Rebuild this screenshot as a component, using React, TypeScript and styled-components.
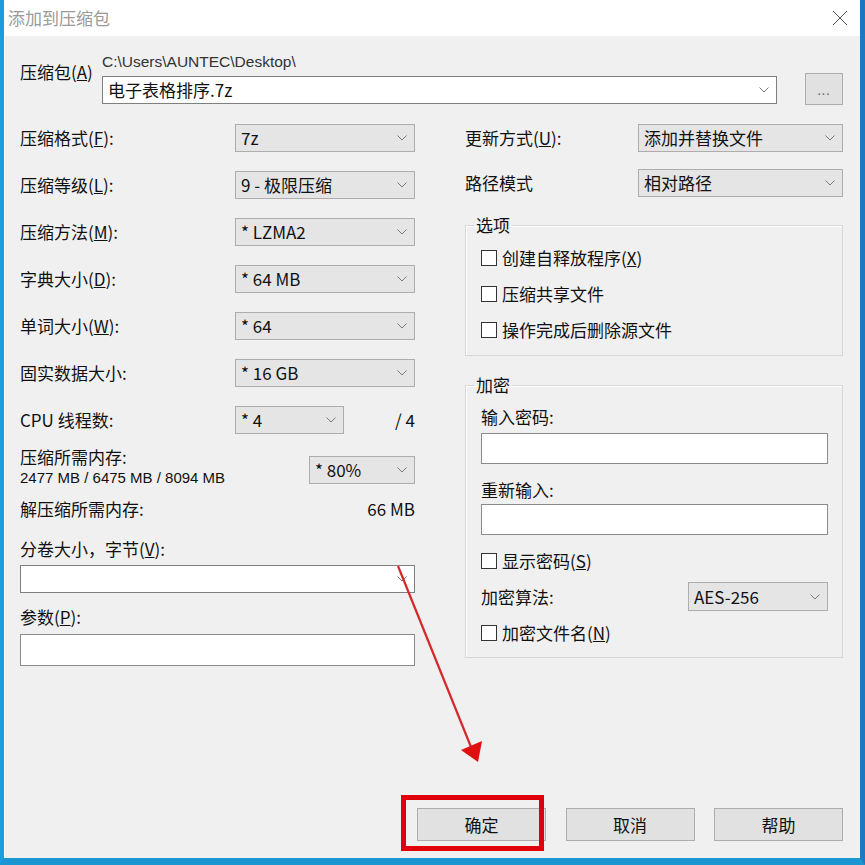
import React from "react";
import styled, { createGlobalStyle } from "styled-components";

const GlobalStyle = createGlobalStyle`
  html, body { margin: 0; padding: 0; background: #ffffff; }
  body { font-family: "Noto Sans CJK SC", "Liberation Sans", sans-serif; }
  * { box-sizing: border-box; }
`;

const Window = styled.div`
  position: relative;
  width: 865px;
  height: 865px;
  display: flex;
  flex-direction: column;
  border-left: 4px solid #1d9ce0;
  border-right: 5px solid #1f78bf;
  border-bottom: 7px solid #1c96d2;
  background: #f0f0f0;
  font-size: 17px;
  color: #111;
`;

const TitleBar = styled.div`
  flex: none;
  height: 36px;
  background: #ffffff;
  display: flex;
  align-items: center;
  justify-content: space-between;
  padding: 0 12px 0 4px;
`;

const TitleText = styled.span`
  color: #9a9a9a;
  font-size: 17px;
  line-height: 20px;
`;

const Body = styled.div`
  flex: 1;
  display: flex;
  flex-direction: column;
  padding: 17px 17px 17px 16px;
  box-shadow: inset 1px 0 0 #ffffff;
`;

const ArchiveRow = styled.div`
  display: grid;
  grid-template-columns: 82px 1fr 66px;
  align-items: start;
`;

const ArchiveLabel = styled.div`
  padding-top: 9px;
  line-height: 20px;
`;

const PathBlock = styled.div`
  display: flex;
  flex-direction: column;
`;

const PathText = styled.div`
  font-family: "Liberation Sans", "Noto Sans CJK SC", sans-serif;
  line-height: 18px;
  height: 18px;
  font-size: 15.5px;
  color: #333;
`;

const LatinLine = styled.div`
  font-family: "Liberation Sans", "Noto Sans CJK SC", sans-serif;
  font-size: 15px;
  line-height: 21px;
  height: 21px;
`;

const Combo = styled.div<{ $white?: boolean; $h?: number; $w?: number; $mt?: number }>`
  height: ${(p) => p.$h ?? 28}px;
  width: ${(p) => (p.$w ? `${p.$w}px` : "auto")};
  margin-top: ${(p) => p.$mt ?? 0}px;
  display: flex;
  align-items: center;
  justify-content: space-between;
  padding: 0 7px 0 5px;
  background: ${(p) => (p.$white ? "#ffffff" : "#e5e5e5")};
  border: 1px solid ${(p) => (p.$white ? "#7f7f7f" : "#adadad")};
  line-height: 20px;
  white-space: nowrap;
`;

const TextInput = styled.div<{ $h: number; $mt: number }>`
  height: ${(p) => p.$h}px;
  margin-top: ${(p) => p.$mt}px;
  background: #ffffff;
  border: 1px solid #8a8a8a;
`;

const BrowseButton = styled.div`
  justify-self: end;
  margin-top: 20px;
  width: 38px;
  height: 32px;
  background: #e1e1e1;
  border: 1px solid #adadad;
  color: #666;
  font-size: 12px;
  display: flex;
  align-items: center;
  justify-content: center;
  letter-spacing: 1px;
`;

const Columns = styled.div`
  margin-top: 19px;
  display: grid;
  grid-template-columns: 395px 1fr;
  column-gap: 50px;
  align-items: start;
`;

const Column = styled.div`
  display: flex;
  flex-direction: column;
`;

const FieldRow = styled.div<{ $cols: string; $mt?: number; $h?: number }>`
  display: grid;
  grid-template-columns: ${(p) => p.$cols};
  align-items: center;
  height: ${(p) => p.$h ?? 28}px;
  margin-top: ${(p) => p.$mt ?? 0}px;
  line-height: 20px;
`;

const RightText = styled.div`
  text-align: right;
  line-height: 20px;
`;

const TextLine = styled.div<{ $mt?: number }>`
  line-height: 20px;
  margin-top: ${(p) => p.$mt ?? 0}px;
`;

const MemoryBlock = styled.div`
  margin-top: 12px;
  display: grid;
  grid-template-columns: 1fr 106px;
  align-items: start;
`;

const MemoryText = styled.div`
  display: flex;
  flex-direction: column;
  line-height: 21px;
`;

const SplitRow = styled.div<{ $mt?: number }>`
  display: flex;
  justify-content: space-between;
  line-height: 20px;
  margin-top: ${(p) => p.$mt ?? 0}px;
`;

const Group = styled.fieldset<{ $mt: number }>`
  margin: ${(p) => p.$mt}px 0 0 0;
  min-width: 0;
  border: 1px solid #d7d7d7;
  box-shadow: inset 1px 1px 0 #ffffff;
  padding: 0 14px 14px 15px;
  display: flex;
  flex-direction: column;
`;

const GroupOptions = styled(Group)`
  padding-bottom: 15px;
`;

const Legend = styled.legend`
  padding: 0 2px;
  margin-left: -7px;
  line-height: 20px;
`;

const CheckRow = styled.label<{ $mt: number }>`
  display: flex;
  align-items: center;
  gap: 5px;
  height: 20px;
  line-height: 20px;
  margin-top: ${(p) => p.$mt}px;
`;

const CheckBox = styled.span`
  width: 16px;
  height: 16px;
  flex: none;
  background: #ffffff;
  border: 1px solid #333333;
`;

const ButtonRow = styled.div`
  margin-top: auto;
  display: flex;
  justify-content: flex-end;
  gap: 19.5px;
`;

const DialogButton = styled.div`
  width: 129px;
  height: 33px;
  display: flex;
  align-items: center;
  justify-content: center;
  background: #e1e1e1;
  border: 1px solid #adadad;
  line-height: 20px;
`;

const Annotation = styled.svg`
  position: absolute;
  left: -4px;
  top: 0;
  width: 865px;
  height: 865px;
  pointer-events: none;
`;

const Chevron = () => (
  <svg width="10" height="6" viewBox="0 0 10 6">
    <polyline points="0.5,0.5 5,5 9.5,0.5" fill="none" stroke="#7a7a7a" strokeWidth="1" />
  </svg>
);

const CloseIcon = () => (
  <svg width="16" height="16" viewBox="0 0 16 16">
    <line x1="1" y1="1" x2="15" y2="15" stroke="#555" strokeWidth="1" />
    <line x1="15" y1="1" x2="1" y2="15" stroke="#555" strokeWidth="1" />
  </svg>
);

const Select: React.FC<{ value?: string; white?: boolean; w?: number; mt?: number; h?: number }> = ({
  value,
  white,
  w,
  mt,
  h,
}) => (
  <Combo $white={white} $w={w} $mt={mt} $h={h}>
    <span>{value}</span>
    <Chevron />
  </Combo>
);

const leftRows: { label: React.ReactNode; value: string }[] = [
  { label: <>压缩格式(<u>F</u>):</>, value: "7z" },
  { label: <>压缩等级(<u>L</u>):</>, value: "9 - 极限压缩" },
  { label: <>压缩方法(<u>M</u>):</>, value: "* LZMA2" },
  { label: <>字典大小(<u>D</u>):</>, value: "* 64 MB" },
  { label: <>单词大小(<u>W</u>):</>, value: "* 64" },
  { label: <>固实数据大小:</>, value: "* 16 GB" },
];

export default function App() {
  return (
    <>
      <GlobalStyle />
      <Window>
        <TitleBar>
          <TitleText>添加到压缩包</TitleText>
          <CloseIcon />
        </TitleBar>
        <Body>
          <ArchiveRow>
            <ArchiveLabel>
              压缩包(<u>A</u>)
            </ArchiveLabel>
            <PathBlock>
              <PathText>C:\Users\AUNTEC\Desktop\</PathText>
              <Select value="电子表格排序.7z" white mt={5} />
            </PathBlock>
            <BrowseButton>...</BrowseButton>
          </ArchiveRow>

          <Columns>
            <Column>
              {leftRows.map((r, i) => (
                <FieldRow key={i} $cols="1fr 180px" $mt={i === 0 ? 0 : 19}>
                  <span>{r.label}</span>
                  <Select value={r.value} />
                </FieldRow>
              ))}
              <FieldRow $cols="215px 109px 1fr" $mt={19}>
                <span>CPU 线程数:</span>
                <Select value="* 4" />
                <RightText>/ 4</RightText>
              </FieldRow>
              <MemoryBlock>
                <MemoryText>
                  <span>压缩所需内存:</span>
                  <LatinLine>2477 MB / 6475 MB / 8094 MB</LatinLine>
                </MemoryText>
                <Select value="* 80%" mt={10} />
              </MemoryBlock>
              <SplitRow $mt={11}>
                <span>解压缩所需内存:</span>
                <span>66 MB</span>
              </SplitRow>
              <TextLine $mt={20}>
                分卷大小，字节(<u>V</u>):
              </TextLine>
              <Select white mt={6} />
              <TextLine $mt={14}>
                参数(<u>P</u>):
              </TextLine>
              <TextInput $h={32} $mt={7} />
            </Column>

            <Column>
              <FieldRow $cols="1fr 205px">
                <span>
                  更新方式(<u>U</u>):
                </span>
                <Select value="添加并替换文件" />
              </FieldRow>
              <FieldRow $cols="1fr 205px" $mt={17}>
                <span>路径模式</span>
                <Select value="相对路径" />
              </FieldRow>
              <GroupOptions $mt={18}>
                <Legend>选项</Legend>
                <CheckRow $mt={13}>
                  <CheckBox />
                  <span>
                    创建自释放程序(<u>X</u>)
                  </span>
                </CheckRow>
                <CheckRow $mt={16}>
                  <CheckBox />
                  <span>压缩共享文件</span>
                </CheckRow>
                <CheckRow $mt={16}>
                  <CheckBox />
                  <span>操作完成后删除源文件</span>
                </CheckRow>
              </GroupOptions>
              <Group $mt={19}>
                <Legend>加密</Legend>
                <TextLine $mt={12}>输入密码:</TextLine>
                <TextInput $h={31} $mt={6} />
                <TextLine $mt={16}>重新输入:</TextLine>
                <TextInput $h={31} $mt={4} />
                <CheckRow $mt={16}>
                  <CheckBox />
                  <span>
                    显示密码(<u>S</u>)
                  </span>
                </CheckRow>
                <FieldRow $cols="1fr 140px" $mt={11} $h={29}>
                  <span>加密算法:</span>
                  <Select value="AES-256" h={29} />
                </FieldRow>
                <CheckRow $mt={12}>
                  <CheckBox />
                  <span>
                    加密文件名(<u>N</u>)
                  </span>
                </CheckRow>
              </Group>
            </Column>
          </Columns>

          <ButtonRow>
            <DialogButton>确定</DialogButton>
            <DialogButton>取消</DialogButton>
            <DialogButton>帮助</DialogButton>
          </ButtonRow>
        </Body>

        <Annotation viewBox="0 0 865 865">
          <line x1="398" y1="566" x2="471" y2="747" stroke="#d6282a" strokeWidth="2.2" />
          <polygon points="461,750 482,741 478,762" fill="#e01010" />
          <rect x="403.5" y="797.5" width="138" height="51" fill="none" stroke="#e0000a" strokeWidth="5" />
        </Annotation>
      </Window>
    </>
  );
}
